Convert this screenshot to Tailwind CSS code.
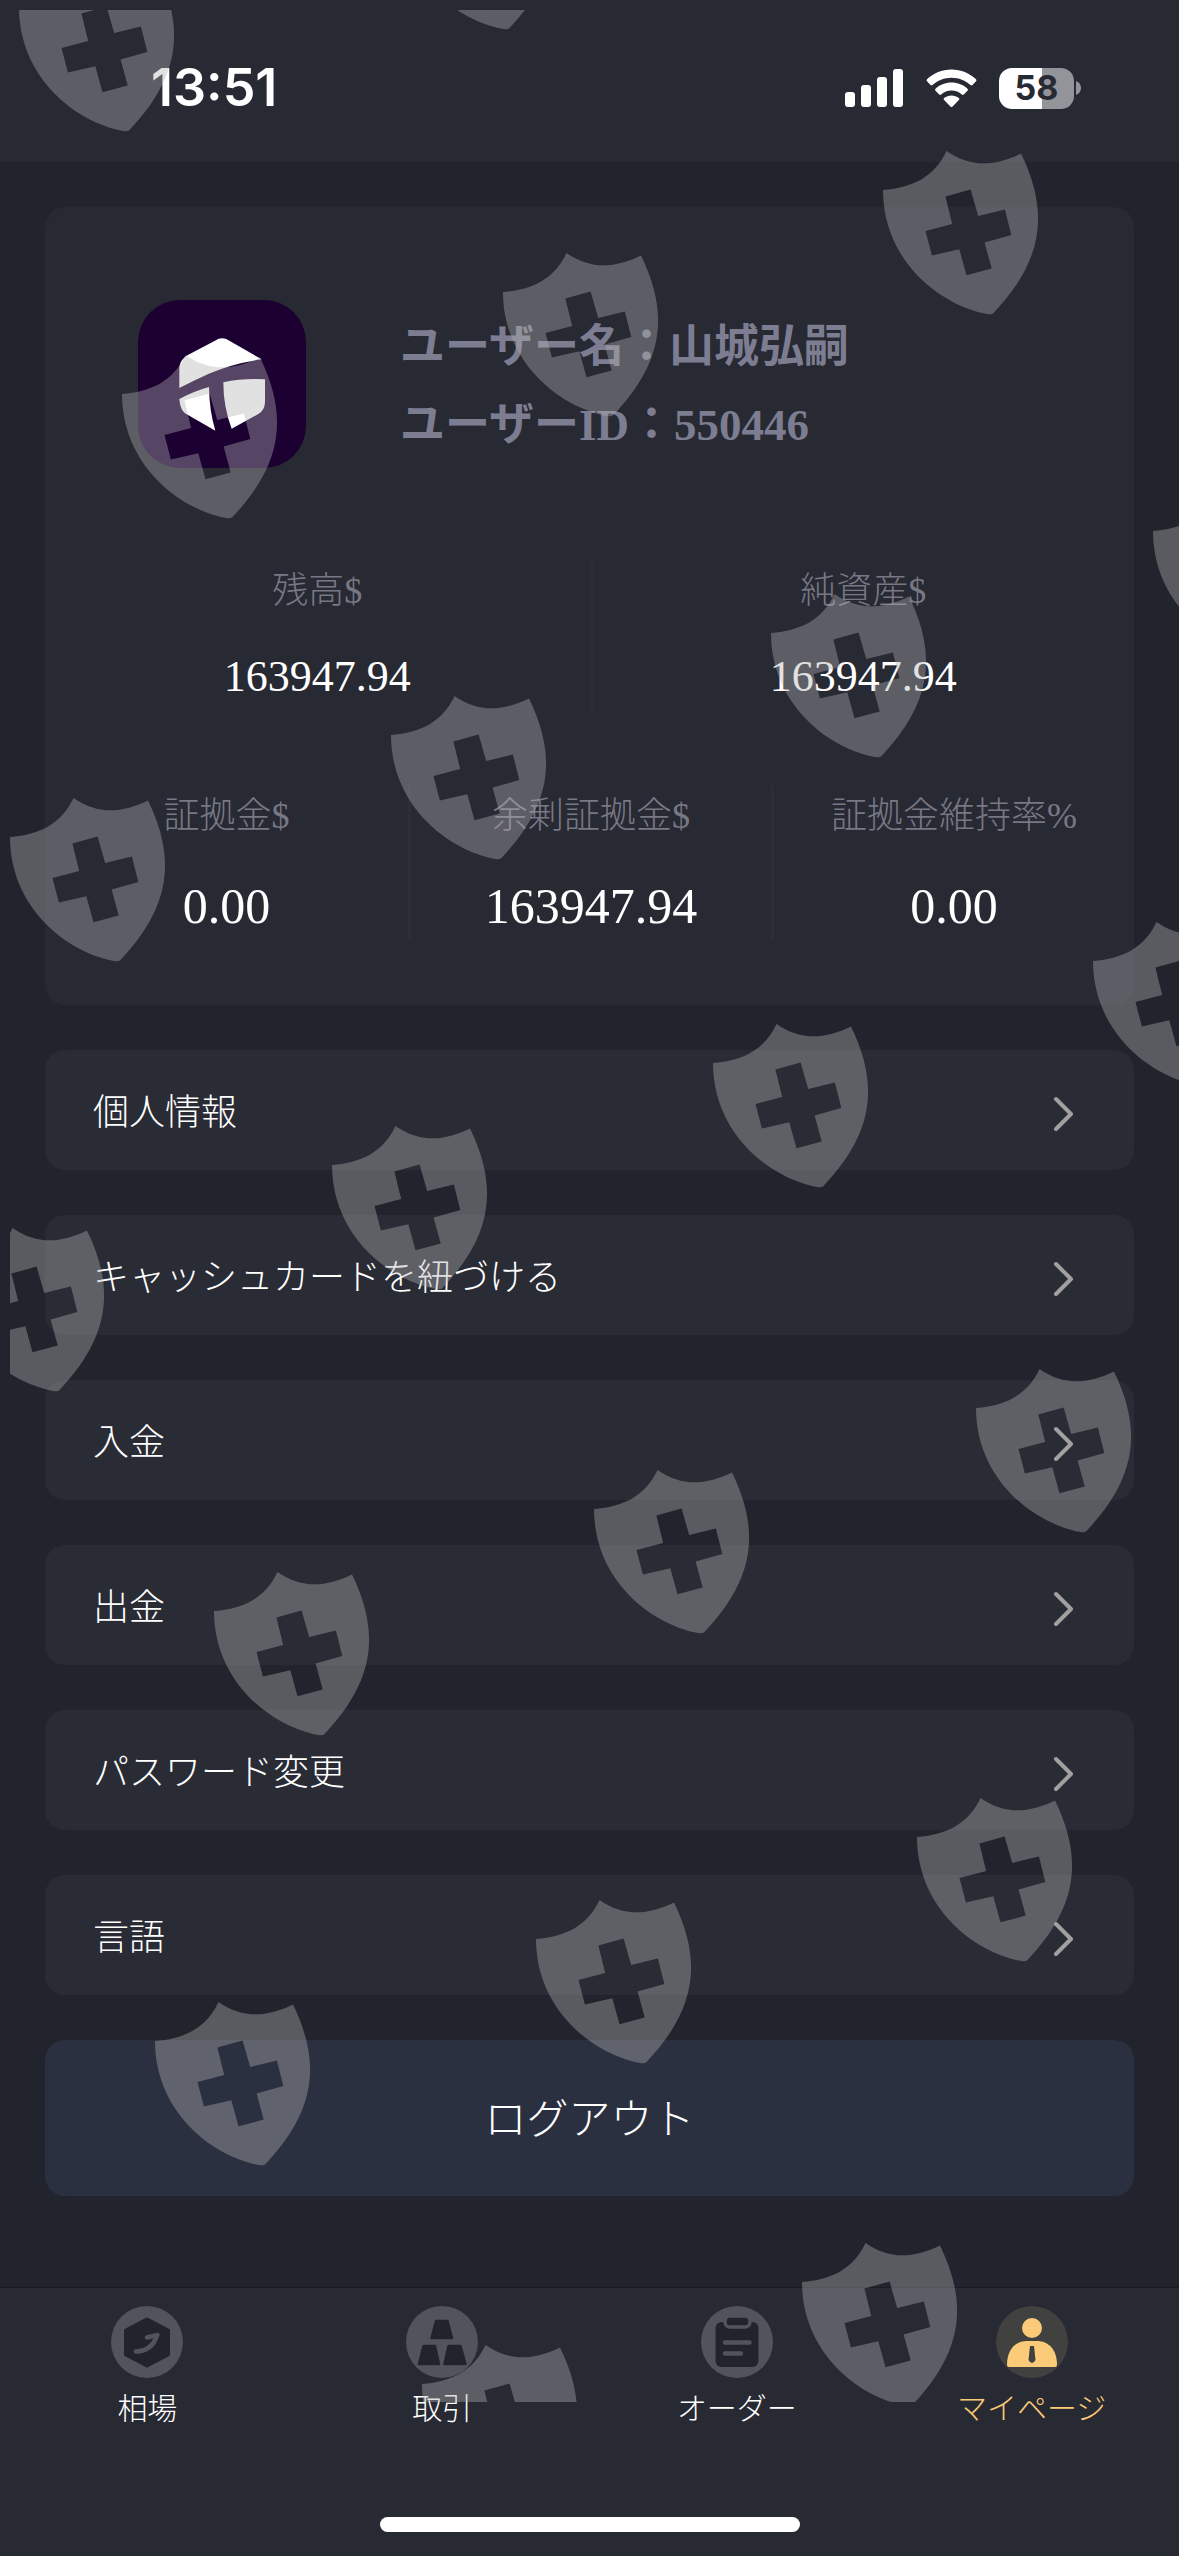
<!DOCTYPE html>
<html lang="ja">
<head>
<meta charset="utf-8">
<meta name="viewport" content="width=device-width, initial-scale=1">
<title>マイページ</title>
<script src="https://cdn.jsdelivr.net/npm/@tailwindcss/browser@4"></script>
</head>
<body class="bg-[#21232d]">
<div class="relative flex min-h-screen flex-col overflow-hidden bg-[#21232d] font-['Liberation_Serif','Noto_Sans_CJK_JP',serif] font-light text-white">

  <!-- Status bar -->
  <header class="flex h-[162px] items-center justify-between bg-[#272933] pt-[14px] pr-[98px] pl-[151px] font-['Inter',sans-serif]">
    <time class="text-[52px] leading-[60px] font-semibold">13:51</time>
    <div class="flex items-center gap-[22px]">
      <svg class="h-[38px] w-[59px]" viewBox="0 0 59 38" fill="#fff" aria-hidden="true">
        <rect x="0" y="23" width="10" height="15" rx="3"/><rect x="16" y="16" width="10" height="22" rx="3"/><rect x="32" y="8" width="10" height="30" rx="3"/><rect x="48" y="0" width="10" height="38" rx="3"/>
      </svg>
      <svg class="h-[38px] w-[51px]" viewBox="0 0 51 38" fill="#fff" aria-hidden="true">
        <path d="M25.500 0.500C35 .5 43.500 4.200 50 10.200q1 1 0 2L46.500 16q-1 .9-2 0C39.500 11.500 32.800 8.700 25.500 8.700S11.500 11.500 6.500 16q-1 .9-2 0L1 12.200q-1-1 0-2C7.500 4.200 16 .5 25.500.5Z"/>
        <path d="M25.500 13.500c6.200 0 11.800 2.300 16 6.200q1 1 0 2L37.800 25.500q-1 .9-2 0c-2.700-2.400-6.300-3.900-10.300-3.900s-7.600 1.500-10.300 3.900q-1 .9-2 0L9.500 21.700q-1-1 0-2c4.200-3.900 9.800-6.200 16-6.200Z"/>
        <path d="M25.500 26.500c2.800 0 5.300 1 7.300 2.600q1 1 .1 2L26.600 37.500q-1.100 1-2.200 0L18.100 31.100q-.9-1 .1-2c2-1.600 4.500-2.600 7.300-2.600Z"/>
      </svg>
      <div class="flex items-center gap-[2px]">
        <div class="flex h-[41px] w-[75px] items-center justify-center rounded-[13px] bg-linear-to-r from-white from-58% to-[#939499] to-58% text-[34px] leading-none font-bold text-[#272933]">58</div>
        <svg class="h-[14px] w-[5px]" viewBox="0 0 5 14" aria-hidden="true"><path d="M0 0Q5 2 5 7T0 14Z" fill="#939499"/></svg>
      </div>
    </div>
  </header>

  <main class="mx-[45px] mt-[45px] flex flex-col gap-[45px]">
    <!-- Account summary -->
    <section class="rounded-[20px] bg-[#272933] pt-[93px] pb-[64px]">
      <div class="flex items-center gap-[94px] px-[93px]">
        <svg class="size-[168px] shrink-0 rounded-[42px]" viewBox="114 58 504 504" role="img" aria-label="アバター">
          <path d="M114 58h504v504H114z" fill="#1b0031"/>
          <g fill="#fff">
            <path d="M262 224L345 180Q366 166 388 180L485 236Q400 248 330 278Q285 298 238 322V258Q242 236 262 224Z"/>
            <path d="M238 355Q280 332 327 319Q328 390 346 450L255 398Q240 386 238 355Z"/>
            <path d="M370 305Q430 292 495 296V365Q494 390 475 400L395 444Q370 380 370 305Z"/>
          </g>
        </svg>
        <div class="pt-[4px] text-[45px] leading-[78px] font-bold text-[#7c7d91]">
          <p>ユーザー名：山城弘嗣</p>
          <p>ユーザーID：550446</p>
        </div>
      </div>
      <dl class="mt-[92px] grid grid-cols-2 text-center">
        <div>
          <dt class="text-[36px] leading-[62px] text-[#777884]">残高$</dt>
          <dd class="mt-[20px] text-[44px] leading-[70px]">163947.94</dd>
        </div>
        <div class="border-l-3 border-[#2b2d37]">
          <dt class="text-[36px] leading-[62px] text-[#777884]">純資産$</dt>
          <dd class="mt-[20px] text-[44px] leading-[70px]">163947.94</dd>
        </div>
      </dl>
      <dl class="mt-[73px] grid grid-cols-3 text-center">
        <div>
          <dt class="text-[36px] leading-[62px] text-[#777884]">証拠金$</dt>
          <dd class="mt-[24px] text-[50px] leading-[70px]">0.00</dd>
        </div>
        <div class="border-l-3 border-[#2b2d37]">
          <dt class="text-[36px] leading-[62px] text-[#777884]">余剰証拠金$</dt>
          <dd class="mt-[24px] text-[50px] leading-[70px]">163947.94</dd>
        </div>
        <div class="border-l-3 border-[#2b2d37]">
          <dt class="text-[36px] leading-[62px] text-[#777884]">証拠金維持率%</dt>
          <dd class="mt-[24px] text-[50px] leading-[70px]">0.00</dd>
        </div>
      </dl>
    </section>

    <!-- Menu -->
    <nav class="flex flex-col gap-[45px] text-[36px]" aria-label="メニュー">
      <a href="#" class="flex h-[120px] items-center justify-between rounded-[20px] bg-[#292b35] pt-[5px] pr-[60px] pl-[48px]">個人情報<svg class="h-[36px] w-[22px]" viewBox="0 0 22 36" fill="none" stroke="#a19f9f" stroke-width="4" stroke-linecap="round" stroke-linejoin="round" aria-hidden="true"><path d="M4 4L19 19L4 34"/></svg></a>
      <a href="#" class="flex h-[120px] items-center justify-between rounded-[20px] bg-[#292b35] pt-[5px] pr-[60px] pl-[48px]">キャッシュカードを紐づける<svg class="h-[36px] w-[22px]" viewBox="0 0 22 36" fill="none" stroke="#a19f9f" stroke-width="4" stroke-linecap="round" stroke-linejoin="round" aria-hidden="true"><path d="M4 4L19 19L4 34"/></svg></a>
      <a href="#" class="flex h-[120px] items-center justify-between rounded-[20px] bg-[#292b35] pt-[5px] pr-[60px] pl-[48px]">入金<svg class="h-[36px] w-[22px]" viewBox="0 0 22 36" fill="none" stroke="#a19f9f" stroke-width="4" stroke-linecap="round" stroke-linejoin="round" aria-hidden="true"><path d="M4 4L19 19L4 34"/></svg></a>
      <a href="#" class="flex h-[120px] items-center justify-between rounded-[20px] bg-[#292b35] pt-[5px] pr-[60px] pl-[48px]">出金<svg class="h-[36px] w-[22px]" viewBox="0 0 22 36" fill="none" stroke="#a19f9f" stroke-width="4" stroke-linecap="round" stroke-linejoin="round" aria-hidden="true"><path d="M4 4L19 19L4 34"/></svg></a>
      <a href="#" class="flex h-[120px] items-center justify-between rounded-[20px] bg-[#292b35] pt-[5px] pr-[60px] pl-[48px]">パスワード変更<svg class="h-[36px] w-[22px]" viewBox="0 0 22 36" fill="none" stroke="#a19f9f" stroke-width="4" stroke-linecap="round" stroke-linejoin="round" aria-hidden="true"><path d="M4 4L19 19L4 34"/></svg></a>
      <a href="#" class="flex h-[120px] items-center justify-between rounded-[20px] bg-[#292b35] pt-[5px] pr-[60px] pl-[48px]">言語<svg class="h-[36px] w-[22px]" viewBox="0 0 22 36" fill="none" stroke="#a19f9f" stroke-width="4" stroke-linecap="round" stroke-linejoin="round" aria-hidden="true"><path d="M4 4L19 19L4 34"/></svg></a>
    </nav>

    <button type="button" class="h-[156px] rounded-[20px] bg-[#2b3040] pt-[4px] text-[42px]">ログアウト</button>
  </main>

  <!-- Tab bar -->
  <footer class="mt-auto flex h-[269px] flex-col justify-between border-t border-[#191b24] bg-[#272933] pt-[18px] pb-[24px]">
    <nav class="grid grid-cols-4 text-center text-[30px] leading-[44px]" aria-label="タブ">
      <a href="#" class="flex flex-col items-center gap-[9px]">
        <svg class="size-[72px]" viewBox="0 0 72 72" aria-hidden="true">
          <circle cx="36" cy="36" r="36" fill="#53535d"/>
          <path d="M36 13.500L57 24.500V48.500L36 59.500L15 48.500V24.500Z" fill="#22242d" stroke="#22242d" stroke-width="4" stroke-linejoin="round"/>
          <path d="M25 45.500Q41 45 46 29.500M36 31.500L46.500 29" fill="none" stroke="#53535d" stroke-width="4.500" stroke-linecap="round" stroke-linejoin="round"/>
        </svg>
        <span>相場</span>
      </a>
      <a href="#" class="flex flex-col items-center gap-[9px]">
        <svg class="size-[72px]" viewBox="0 0 72 72" aria-hidden="true">
          <circle cx="36" cy="36" r="36" fill="#53535d"/>
          <path d="M30 15H41.500L46 32H25.500ZM17.500 40H29L33 58H13ZM42.500 40H54.500L59.500 58H38.500Z" fill="#22242d" stroke="#22242d" stroke-width="2.500" stroke-linejoin="round"/>
        </svg>
        <span>取引</span>
      </a>
      <a href="#" class="flex flex-col items-center gap-[9px]">
        <svg class="size-[72px]" viewBox="0 0 72 72" aria-hidden="true">
          <circle cx="36" cy="36" r="36" fill="#53535d"/>
          <rect x="14.500" y="16" width="43" height="45" rx="6" fill="#22242d"/>
          <rect x="24" y="10" width="25" height="11" rx="5" fill="#22242d" stroke="#53535d" stroke-width="3.500"/>
          <path d="M24 36.500H48.500M24 47.500H40" stroke="#53535d" stroke-width="4.500" stroke-linecap="round"/>
        </svg>
        <span>オーダー</span>
      </a>
      <a href="#" class="flex flex-col items-center gap-[9px] text-[#fbca77]" aria-current="page">
        <svg class="size-[72px]" viewBox="0 0 72 72" aria-hidden="true">
          <circle cx="36" cy="36" r="36" fill="#41413f"/>
          <circle cx="36" cy="22" r="10" fill="#fbcb7a"/>
          <path d="M11 59C11 43 20 35 31 35H41C52 35 61 43 61 59Q61 61 59 61H13Q11 61 11 59Z" fill="#fbcb7a"/>
          <path d="M34 40H38L39.500 54Q38 57 36 57T32.500 54Z" fill="#41413f"/>
        </svg>
        <span>マイページ</span>
      </a>
    </nav>
    <div class="h-[15px] w-[420px] self-center rounded-full bg-white"></div>
  </footer>

  <!-- Shield watermark -->
  <svg class="pointer-events-none absolute top-[10px] left-[10px] h-[2392px] w-[calc(100%-10px)] overflow-hidden" fill="#b5b2b4" fill-opacity="0.39" aria-hidden="true">
    <defs>
      <path id="shield" fill-rule="evenodd" d="M0 39C30 37 52 25 63.500 0C88 17 112 15 138 2.500C167 62 160 110 110 162.500C108 164 104 163 99 162C50 150 0 105 0 39ZM62.400 45.600L69.200 73L42.500 80L48.900 104.600L76.300 98.300L83.500 124.300L108.700 117.600L101.600 91.600L128.300 84L121.900 58.600L95.200 65L87.600 38.600Z"/>
    </defs>
    <use href="#shield" x="9" y="-42"/><use href="#shield" x="389" y="-144"/>
    <use href="#shield" x="873" y="141"/><use href="#shield" x="493" y="243"/><use href="#shield" x="112" y="345"/>
    <use href="#shield" x="1143" y="482"/><use href="#shield" x="761" y="584"/><use href="#shield" x="381" y="686"/><use href="#shield" x="0" y="788"/>
    <use href="#shield" x="1083" y="912"/><use href="#shield" x="703" y="1014"/><use href="#shield" x="322" y="1116"/><use href="#shield" x="-61" y="1218"/>
    <use href="#shield" x="966" y="1359"/><use href="#shield" x="584" y="1460"/><use href="#shield" x="204" y="1562"/>
    <use href="#shield" x="907" y="1788"/><use href="#shield" x="526" y="1890"/><use href="#shield" x="145" y="1992"/>
    <use href="#shield" x="792" y="2233"/><use href="#shield" x="412" y="2335"/>
  </svg>
</div>
</body>
</html>
